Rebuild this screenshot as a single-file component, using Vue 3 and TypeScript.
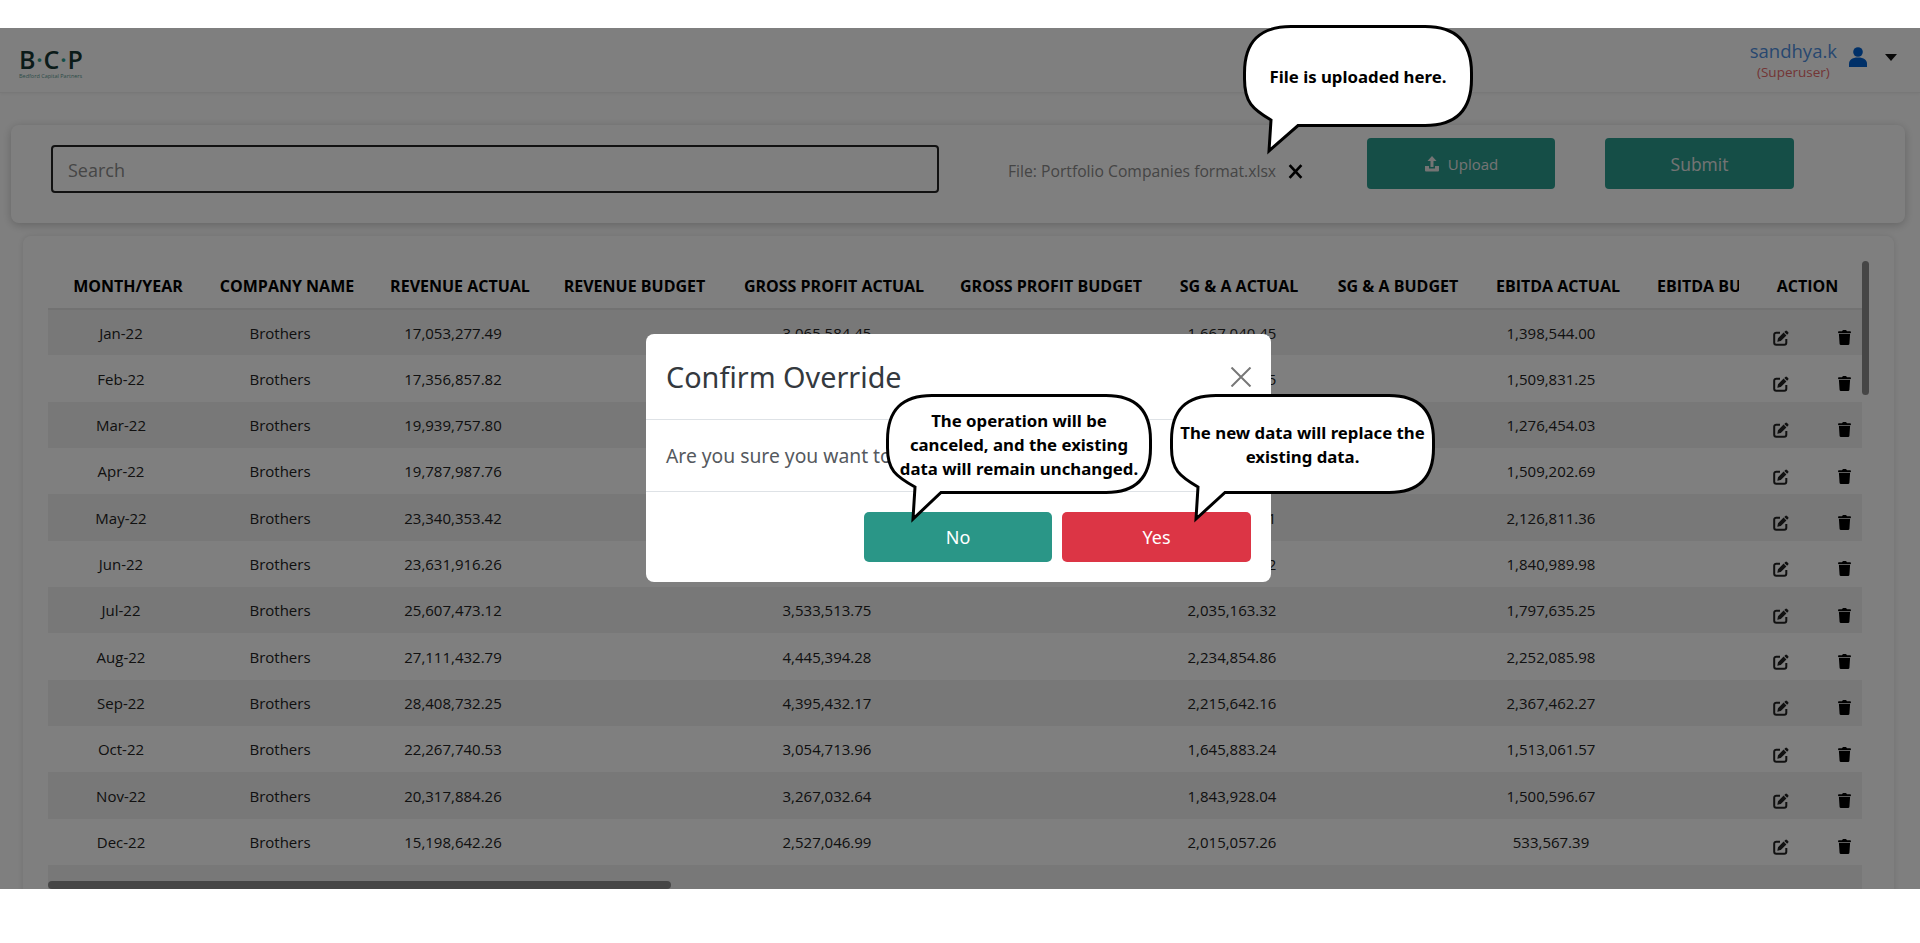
<script setup lang="ts">
interface Row {
  month: string
  revenue: string
  profit: string
  sga: string
  ebitda: string
}

interface Bubble {
  name: string
  lines: string[]
  w: number
  h: number
  r: number
  tailL: number
  tailR: number
  tipX: number
  tipY: number
}

const headers = [
  'Month/Year',
  'Company Name',
  'Revenue Actual',
  'Revenue Budget',
  'Gross Profit Actual',
  'Gross Profit Budget',
  'SG & A Actual',
  'SG & A Budget',
  'EBITDA Actual',
  'EBITDA Budget',
  'Action',
]

const rows: Row[] = [
  { month: 'Jan-22', revenue: '17,053,277.49', profit: '3,065,584.45', sga: '1,667,040.45', ebitda: '1,398,544.00' },
  { month: 'Feb-22', revenue: '17,356,857.82', profit: '3,118,402.67', sga: '1,702,316.15', ebitda: '1,509,831.25' },
  { month: 'Mar-22', revenue: '19,939,757.80', profit: '3,402,918.33', sga: '1,884,120.76', ebitda: '1,276,454.03' },
  { month: 'Apr-22', revenue: '19,787,987.76', profit: '3,377,250.14', sga: '1,826,405.92', ebitda: '1,509,202.69' },
  { month: 'May-22', revenue: '23,340,353.42', profit: '4,150,662.08', sga: '2,023,851.71', ebitda: '2,126,811.36' },
  { month: 'Jun-22', revenue: '23,631,916.26', profit: '3,920,774.51', sga: '2,079,784.52', ebitda: '1,840,989.98' },
  { month: 'Jul-22', revenue: '25,607,473.12', profit: '3,533,513.75', sga: '2,035,163.32', ebitda: '1,797,635.25' },
  { month: 'Aug-22', revenue: '27,111,432.79', profit: '4,445,394.28', sga: '2,234,854.86', ebitda: '2,252,085.98' },
  { month: 'Sep-22', revenue: '28,408,732.25', profit: '4,395,432.17', sga: '2,215,642.16', ebitda: '2,367,462.27' },
  { month: 'Oct-22', revenue: '22,267,740.53', profit: '3,054,713.96', sga: '1,645,883.24', ebitda: '1,513,061.57' },
  { month: 'Nov-22', revenue: '20,317,884.26', profit: '3,267,032.64', sga: '1,843,928.04', ebitda: '1,500,596.67' },
  { month: 'Dec-22', revenue: '15,198,642.26', profit: '2,527,046.99', sga: '2,015,057.26', ebitda: '533,567.39' },
]

const bubbles: Bubble[] = [
  { name: 'file', lines: ['File is uploaded here.'], w: 230, h: 102, r: 48, tailL: 28, tailR: 55, tipX: 26, tipY: 126 },
  {
    name: 'no',
    lines: ['The operation will be', 'canceled, and the existing', 'data will remain unchanged.'],
    w: 266,
    h: 100,
    r: 46,
    tailL: 29,
    tailR: 55,
    tipX: 27,
    tipY: 125,
  },
  {
    name: 'yes',
    lines: ['The new data will replace the', 'existing data.'],
    w: 265,
    h: 100,
    r: 46,
    tailL: 28,
    tailR: 55,
    tipX: 26,
    tipY: 125,
  },
]

// speech bubble outline, runs clockwise from the top left corner
function bubblePath(b: Bubble): string {
  const s = 1.5
  const k = b.r * 0.35
  const right = b.w - s
  const bottom = b.h - s
  return [
    `M${b.r} ${s}`,
    `H${b.w - b.r}`,
    `C${b.w - k} ${s} ${right} ${k} ${right} ${b.r}`,
    `V${b.h - b.r}`,
    `C${right} ${b.h - k} ${b.w - k} ${bottom} ${b.w - b.r} ${bottom}`,
    `H${b.tailR}`,
    `L${b.tipX} ${b.tipY}`,
    `L${b.tailL} ${b.h - 7}`,
    `C${s + 8} ${b.h - 18} ${s} ${b.h - k - 8} ${s} ${b.h - b.r}`,
    `V${b.r}`,
    `C${s} ${k} ${k} ${s} ${b.r} ${s}`,
    'Z',
  ].join(' ')
}
</script>

<template>
  <div class="shot">
    <div class="page">
      <header class="navbar">
        <div class="logo">
          <div class="logo-mark">B<i>·</i>C<i>·</i>P</div>
          <div class="logo-sub">Bedford Capital Partners</div>
        </div>
        <div class="user">
          <div class="user-text">
            <div class="user-name">sandhya.k</div>
            <div class="user-role">(Superuser)</div>
          </div>
          <svg class="user-icon" viewBox="0 0 20 20">
            <circle cx="10" cy="5" r="4.8" />
            <path d="M1 20v-3c0-4 3-6.500 9-6.500s9 2.500 9 6.500v3z" />
          </svg>
          <span class="caret"></span>
        </div>
      </header>

      <section class="toolbar">
        <input class="search" type="text" placeholder="Search" />
        <span class="file-name">File: Portfolio Companies format.xlsx</span>
        <svg class="file-clear" viewBox="0 0 14 14">
          <path d="M1.500 1l11 12M12.500 1l-11 12" />
        </svg>
        <button class="btn btn-upload" type="button">
          <svg class="upload-icon" viewBox="0 0 16 16">
            <path d="M8 0l4.500 5H9.500v6h-3V5H3.500z" />
            <path d="M1 10h4v2.500h6V10h4v4.500a1 1 0 0 1-1 1H2a1 1 0 0 1-1-1z" />
          </svg>
          Upload
        </button>
        <button class="btn btn-submit" type="button">Submit</button>
      </section>

      <section class="table-card">
        <div class="table-wrap">
          <table class="data-table">
            <colgroup>
              <col class="c1" /><col class="c2" /><col class="c3" /><col class="c4" />
              <col class="c5" /><col class="c6" /><col class="c7" /><col class="c8" />
              <col class="c9" /><col class="c10" /><col class="c11" />
            </colgroup>
            <thead>
              <tr>
                <th v-for="h in headers" :key="h">{{ h }}</th>
              </tr>
            </thead>
            <tbody>
              <tr v-for="row in rows" :key="row.month">
                <td>{{ row.month }}</td>
                <td>Brothers</td>
                <td>{{ row.revenue }}</td>
                <td></td>
                <td>{{ row.profit }}</td>
                <td></td>
                <td>{{ row.sga }}</td>
                <td></td>
                <td>{{ row.ebitda }}</td>
                <td></td>
                <td>
                  <div class="actions">
                    <svg class="edit-icon" viewBox="0 0 16 16">
                      <path class="edit-box" d="M7 2.700H3.200A2 2 0 0 0 1.200 4.700v8.100a2 2 0 0 0 2 2h8.100a2 2 0 0 0 2-2V9" />
                      <path d="M12.300.9a1.200 1.200 0 0 1 1.700 0l1.100 1.100a1.200 1.200 0 0 1 0 1.700l-1 1-2.800-2.800zM10.600 2.600l2.800 2.800-5.600 5.600-3.500.7.700-3.500z" />
                    </svg>
                    <svg class="trash-icon" viewBox="0 0 14 16">
                      <path d="M4.700.6C4.900.2 5.300 0 5.700 0h2.600c.4 0 .8.2 1 .6L9.700 1.300H13a1 1 0 0 1 0 2H1a1 1 0 0 1 0-2h3.300zM1 4.300h12l-.7 10.300a1.500 1.500 0 0 1-1.500 1.400H3.200a1.500 1.500 0 0 1-1.500-1.400z" />
                    </svg>
                  </div>
                </td>
              </tr>
              <tr class="row-filler"><td colspan="11"></td></tr>
            </tbody>
          </table>
          <div class="thumb-x"></div>
        </div>
        <div class="thumb-y"></div>
      </section>

      <div class="scrim">
        <div class="modal">
          <div class="modal-head">
            <h2 class="modal-title">Confirm Override</h2>
            <svg class="modal-close" viewBox="0 0 22 20">
              <path d="M1.500 0.500l19 19M20.500 0.500l-19 19" />
            </svg>
          </div>
          <div class="modal-body">Are you sure you want to override this data?</div>
          <div class="modal-foot">
            <button class="modal-btn modal-no" type="button">No</button>
            <button class="modal-btn modal-yes" type="button">Yes</button>
          </div>
        </div>
      </div>
    </div>

    <div v-for="b in bubbles" :key="b.name" class="bubble" :class="'bubble-' + b.name">
      <svg class="bubble-shape" :width="b.w" :height="b.tipY + 3">
        <path :d="bubblePath(b)" />
      </svg>
      <div class="bubble-text">
        <div v-for="line in b.lines" :key="line">{{ line }}</div>
      </div>
    </div>
  </div>
</template>

<style scoped>
.shot {
  position: relative;
  height: 943px;
  padding-top: 28px;
  box-sizing: border-box;
  overflow: hidden;
  background: #fff;
  font-family: "Open Sans", "Liberation Sans", sans-serif;
}

.page {
  position: relative;
  height: 861px;
  overflow: hidden;
  background: #ffffff;
}

.navbar {
  display: flex;
  justify-content: space-between;
  height: 65px;
  border-bottom: 1px solid #f0f0f0;
  box-shadow: 0 1px 3px rgba(0, 0, 0, 0.06);
  box-sizing: border-box;
}

.logo {
  padding: 18px 0 0 19px;
  width: 66px;
}

.logo-mark {
  font-size: 25px;
  line-height: 26px;
  font-weight: 600;
  color: #163733;
  white-space: nowrap;
  letter-spacing: 0.6px;
}

.logo-mark i {
  font-style: normal;
  color: #2a9d8f;
}

.logo-sub {
  margin-top: 1px;
  font-size: 5.500px;
  line-height: 7px;
  color: #5a9a91;
  white-space: nowrap;
}

.user {
  display: flex;
  align-items: flex-start;
  padding: 10px 23px 0 0;
}

.user-text {
  text-align: center;
}

.user-name {
  font-size: 18.500px;
  line-height: 26px;
  color: #4f8fe0;
}

.user-role {
  font-size: 13.500px;
  line-height: 17px;
  color: #e66a6a;
}

.user-icon {
  width: 20px;
  height: 20px;
  margin: 9px 1px 0 11px;
  fill: #0060d0;
}

.caret {
  margin: 16px 0 0 16px;
  border-left: 6px solid transparent;
  border-right: 6px solid transparent;
  border-top: 7px solid #111;
}

.toolbar {
  display: flex;
  align-items: flex-start;
  width: 1894px;
  height: 98px;
  margin: 32px 0 0 11px;
  padding-left: 40px;
  box-sizing: border-box;
  border-radius: 8px;
  background: #fff;
  box-shadow: 0 2px 10px rgba(0, 0, 0, 0.22);
}

.search {
  width: 888px;
  height: 48px;
  margin-top: 20px;
  padding: 2px 15px 0;
  box-sizing: border-box;
  border: 2px solid #222;
  border-radius: 4px;
  background: transparent;
  font: 18px "Open Sans", sans-serif;
  outline: none;
}

.search::placeholder {
  color: #8c8c8c;
  opacity: 1;
}

.file-name {
  width: 267px;
  margin: 35px 0 0 69px;
  font-size: 15.700px;
  line-height: 22px;
  color: #8a8a8a;
  white-space: nowrap;
}

.file-clear {
  width: 15px;
  height: 15px;
  margin: 39px 0 0 13px;
  fill: none;
  stroke: #000;
  stroke-width: 2.500;
}

.btn {
  display: flex;
  align-items: center;
  justify-content: center;
  height: 51px;
  margin-top: 13px;
  border: 0;
  border-radius: 4px;
  background: #2a9d8f;
  color: #e8e8e8;
  font-family: "Open Sans", sans-serif;
}

.btn-upload {
  width: 188px;
  margin-left: 64px;
  font-size: 15px;
}

.btn-submit {
  width: 189px;
  margin-left: 50px;
  font-size: 17.500px;
}

.upload-icon {
  width: 16px;
  height: 16px;
  margin-right: 8px;
  fill: #e8e8e8;
}

.table-card {
  position: relative;
  width: 1871px;
  height: 660px;
  margin: 13px 0 0 23px;
  padding: 25px 0 0 25px;
  box-sizing: border-box;
  border-radius: 8px 8px 0 0;
  background: #fff;
  box-shadow: 0 0 6px rgba(0, 0, 0, 0.12);
}

.table-wrap {
  position: relative;
  width: 1814px;
  height: 635px;
  overflow: hidden;
}

.data-table {
  width: 1814px;
  table-layout: fixed;
  border-collapse: collapse;
}

.c1 { width: 146px; }
.c2 { width: 172px; }
.c3 { width: 174px; }
.c4 { width: 175px; }
.c5 { width: 224px; }
.c6 { width: 210px; }
.c7 { width: 166px; }
.c8 { width: 152px; }
.c9 { width: 168px; }
.c10 { width: 104px; }
.c11 { width: 123px; }

.data-table th {
  height: 48px;
  padding: 2px 0 0 14px;
  box-sizing: border-box;
  border-bottom: 2px solid #e4e4e4;
  font-size: 16px;
  font-weight: 700;
  text-transform: uppercase;
  color: #000;
  white-space: nowrap;
  overflow: hidden;
  text-align: center;
}

.data-table th:nth-child(10) {
  padding-left: 22px;
  text-align: left;
}

.data-table td {
  height: 46.350px;
  padding: 0;
  box-sizing: border-box;
  font-size: 15px;
  color: #222;
  text-align: center;
}

.data-table tbody tr:nth-child(odd) {
  background: #f0f0f0;
}

.row-filler td {
  height: 46px;
}

.actions {
  display: flex;
  justify-content: space-between;
  padding: 11px 11px 0 34px;
}

.edit-icon {
  width: 16px;
  height: 16px;
  fill: #222;
}

.edit-box {
  fill: none;
  stroke: #222;
  stroke-width: 2;
}

.trash-icon {
  width: 13px;
  height: 15px;
  fill: #000;
}

.thumb-x {
  position: absolute;
  left: 0;
  top: 620px;
  width: 623px;
  height: 8px;
  border-radius: 4px;
  background: #8c8c8c;
}

.thumb-y {
  position: absolute;
  left: 1839px;
  top: 25px;
  width: 7px;
  height: 134px;
  border-radius: 4px;
  background: #8c8c8c;
}

.scrim {
  position: absolute;
  inset: 0;
  display: flex;
  align-items: center;
  justify-content: center;
  padding-right: 3px;
  background: rgba(0, 0, 0, 0.5);
}

.modal {
  width: 625px;
  height: 248px;
  margin-top: -1px;
  border-radius: 8px;
  background: #fff;
  font-family: "Noto Sans", "Open Sans", sans-serif;
  color: #212529;
}

.modal-head {
  display: flex;
  align-items: center;
  justify-content: space-between;
  height: 86px;
  padding: 0 19px 0 20px;
  box-sizing: border-box;
  border-bottom: 1px solid #dee2e6;
}

.modal-title {
  margin: 0;
  font-size: 28.800px;
  font-weight: 400;
  color: #34393e;
}

.modal-close {
  width: 22px;
  height: 20px;
  fill: none;
  stroke: #777;
  stroke-width: 2;
}

.modal-body {
  height: 72px;
  padding-left: 20px;
  box-sizing: border-box;
  border-bottom: 1px solid #dee2e6;
  font-size: 19.300px;
  line-height: 72px;
  color: #55595e;
  white-space: nowrap;
}

.modal-foot {
  display: flex;
  justify-content: flex-end;
  gap: 10px;
  padding: 20px 20px 0 0;
}

.modal-btn {
  height: 50px;
  border: 0;
  border-radius: 5px;
  color: #fff;
  font: 18px "Noto Sans", sans-serif;
}

.modal-no {
  width: 188px;
  background: #2a9687;
}

.modal-yes {
  width: 189px;
  background: #dc3545;
}

.bubble {
  position: absolute;
}

.bubble-file {
  left: 1243px;
  top: 25px;
  width: 230px;
  height: 102px;
}

.bubble-no {
  left: 886px;
  top: 394px;
  width: 266px;
  height: 100px;
}

.bubble-yes {
  left: 1170px;
  top: 394px;
  width: 265px;
  height: 100px;
}

.bubble-shape {
  position: absolute;
  left: 0;
  top: 0;
  overflow: visible;
}

.bubble-shape path {
  fill: #fff;
  stroke: #000;
  stroke-width: 3;
  stroke-linejoin: miter;
}

.bubble-text {
  position: relative;
  display: flex;
  flex-direction: column;
  justify-content: center;
  height: 100%;
  padding-top: 1px;
  box-sizing: border-box;
  font-family: "Noto Sans", "Open Sans", sans-serif;
  font-size: 16.800px;
  font-weight: 700;
  line-height: 24px;
  text-align: center;
  white-space: nowrap;
  color: #000;
}
</style>
